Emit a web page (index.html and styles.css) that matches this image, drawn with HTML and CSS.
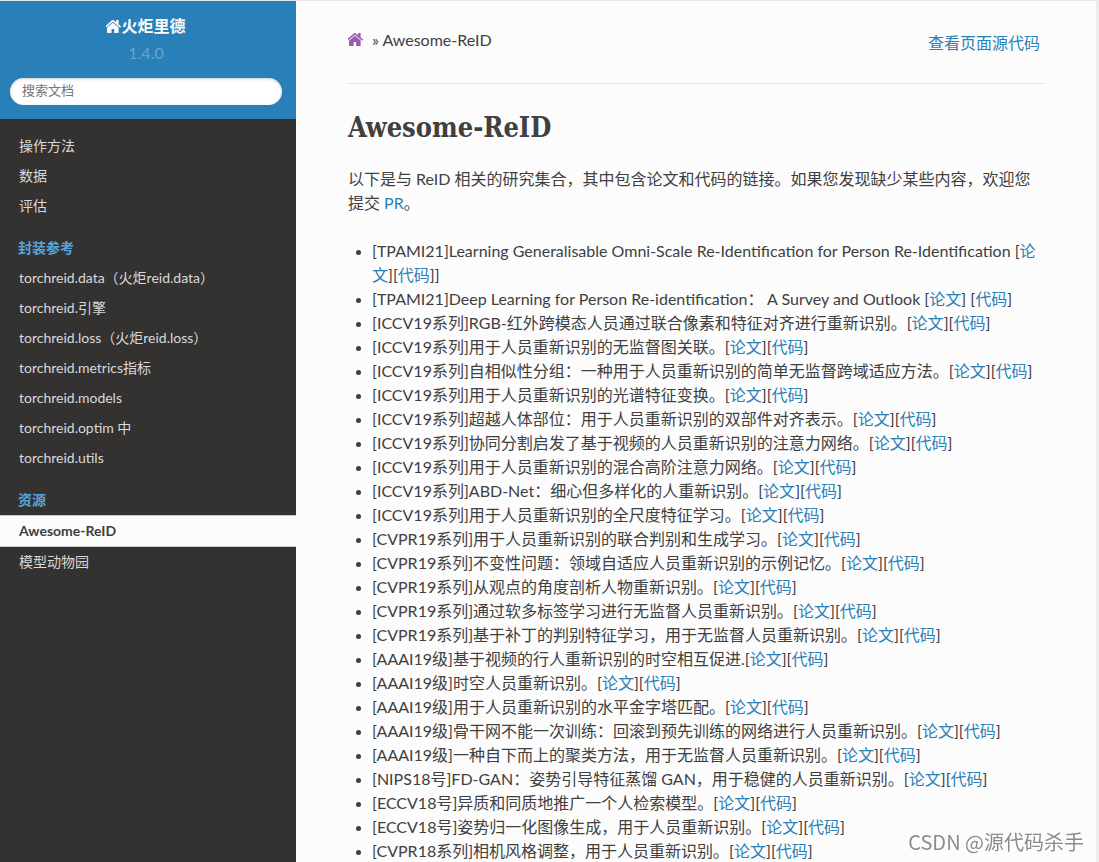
FILE: index.html
```html
<!DOCTYPE html>
<html lang="zh-CN">
<head>
<meta charset="utf-8">
<title>Awesome-ReID</title>
<link rel="stylesheet" href="styles.css">
</head>
<body>
<svg class="sprite" aria-hidden="true">
  <symbol id="home" viewBox="150 250 1492 1290">
    <path d="M1408 992v480q0 26-19 45t-45 19h-384v-384h-256v384h-384q-26 0-45-19t-19-45v-480q0-1 .5-3t.5-3l575-474 575 474q1 2 1 6zm223-69l-62 74q-8 9-21 11h-3q-13 0-21-7l-692-577-692 577q-12 8-24 7-13-2-21-11l-62-74q-8-10-7-23.5t11-21.5l719-599q32-26 76-26t76 26l244 204v-195q0-14 9-23t23-9h192q14 0 23 9t9 23v408l219 182q10 8 11 21.5t-7 23.5z"/>
  </symbol>
</svg>
<div class="shell">
  <aside class="sidebar">
    <div class="brand">
      <a class="brand-link" href="#"><svg class="icon"><use href="#home"/></svg>火炬里德</a>
      <div class="version">1.4.0</div>
      <form class="search-form"><input class="search" type="text" aria-label="搜索文档" placeholder="搜索文档"></form>
    </div>
    <nav class="menu">
      <ul class="menu-list">
        <li><a class="menu-link" href="#">操作方法</a></li>
        <li><a class="menu-link" href="#">数据</a></li>
        <li><a class="menu-link" href="#">评估</a></li>
      </ul>
      <p class="caption">封装参考</p>
      <ul class="menu-list">
        <li><a class="menu-link" href="#">torchreid.data（火炬reid.data）</a></li>
        <li><a class="menu-link" href="#">torchreid.引擎</a></li>
        <li><a class="menu-link" href="#">torchreid.loss（火炬reid.loss）</a></li>
        <li><a class="menu-link" href="#">torchreid.metrics指标</a></li>
        <li><a class="menu-link" href="#">torchreid.models</a></li>
        <li><a class="menu-link" href="#">torchreid.optim 中</a></li>
        <li><a class="menu-link" href="#">torchreid.utils</a></li>
      </ul>
      <p class="caption">资源</p>
      <ul class="menu-list">
        <li><a class="menu-link current" href="#">Awesome-ReID</a></li>
        <li><a class="menu-link" href="#">模型动物园</a></li>
      </ul>
    </nav>
  </aside>
  <main class="content">
    <header class="crumbs">
      <div class="trail"><a class="home-link" href="#" aria-label="主页"><svg class="icon"><use href="#home"/></svg></a><span>» Awesome-ReID</span></div>
      <a class="source" href="#">查看页面源代码</a>
    </header>
    <h1 class="title">Awesome-ReID</h1>
    <p class="intro">以下是与 ReID 相关的研究集合，其中包含论文和代码的链接。如果您发现缺少某些内容，欢迎您提交 <a href="#">PR</a>。</p>
    <ul class="papers">
      <li>[TPAMI21]Learning Generalisable Omni-Scale Re-Identification for Person Re-Identification [<a href="#">论文</a>][<a href="#">代码</a>]]</li>
      <li>[TPAMI21]Deep Learning for Person Re-identification： A Survey and Outlook [<a href="#">论文</a>] [<a href="#">代码</a>]</li>
      <li>[ICCV19系列]RGB-红外跨模态人员通过联合像素和特征对齐进行重新识别。[<a href="#">论文</a>][<a href="#">代码</a>]</li>
      <li>[ICCV19系列]用于人员重新识别的无监督图关联。[<a href="#">论文</a>][<a href="#">代码</a>]</li>
      <li>[ICCV19系列]自相似性分组：一种用于人员重新识别的简单无监督跨域适应方法。[<a href="#">论文</a>][<a href="#">代码</a>]</li>
      <li>[ICCV19系列]用于人员重新识别的光谱特征变换。[<a href="#">论文</a>][<a href="#">代码</a>]</li>
      <li>[ICCV19系列]超越人体部位：用于人员重新识别的双部件对齐表示。[<a href="#">论文</a>][<a href="#">代码</a>]</li>
      <li>[ICCV19系列]协同分割启发了基于视频的人员重新识别的注意力网络。[<a href="#">论文</a>][<a href="#">代码</a>]</li>
      <li>[ICCV19系列]用于人员重新识别的混合高阶注意力网络。[<a href="#">论文</a>][<a href="#">代码</a>]</li>
      <li>[ICCV19系列]ABD-Net：细心但多样化的人重新识别。[<a href="#">论文</a>][<a href="#">代码</a>]</li>
      <li>[ICCV19系列]用于人员重新识别的全尺度特征学习。[<a href="#">论文</a>][<a href="#">代码</a>]</li>
      <li>[CVPR19系列]用于人员重新识别的联合判别和生成学习。[<a href="#">论文</a>][<a href="#">代码</a>]</li>
      <li>[CVPR19系列]不变性问题：领域自适应人员重新识别的示例记忆。[<a href="#">论文</a>][<a href="#">代码</a>]</li>
      <li>[CVPR19系列]从观点的角度剖析人物重新识别。[<a href="#">论文</a>][<a href="#">代码</a>]</li>
      <li>[CVPR19系列]通过软多标签学习进行无监督人员重新识别。[<a href="#">论文</a>][<a href="#">代码</a>]</li>
      <li>[CVPR19系列]基于补丁的判别特征学习，用于无监督人员重新识别。[<a href="#">论文</a>][<a href="#">代码</a>]</li>
      <li>[AAAI19级]基于视频的行人重新识别的时空相互促进.[<a href="#">论文</a>][<a href="#">代码</a>]</li>
      <li>[AAAI19级]时空人员重新识别。[<a href="#">论文</a>][<a href="#">代码</a>]</li>
      <li>[AAAI19级]用于人员重新识别的水平金字塔匹配。[<a href="#">论文</a>][<a href="#">代码</a>]</li>
      <li>[AAAI19级]骨干网不能一次训练：回滚到预先训练的网络进行人员重新识别。[<a href="#">论文</a>][<a href="#">代码</a>]</li>
      <li>[AAAI19级]一种自下而上的聚类方法，用于无监督人员重新识别。[<a href="#">论文</a>][<a href="#">代码</a>]</li>
      <li>[NIPS18号]FD-GAN：姿势引导特征蒸馏 GAN，用于稳健的人员重新识别。[<a href="#">论文</a>][<a href="#">代码</a>]</li>
      <li>[ECCV18号]异质和同质地推广一个人检索模型。[<a href="#">论文</a>][<a href="#">代码</a>]</li>
      <li>[ECCV18号]姿势归一化图像生成，用于人员重新识别。[<a href="#">论文</a>][<a href="#">代码</a>]</li>
      <li>[CVPR18系列]相机风格调整，用于人员重新识别。[<a href="#">论文</a>][<a href="#">代码</a>]</li>
    </ul>
  </main>
</div>
<div class="watermark">CSDN @源代码杀手</div>
</body>
</html>
```

FILE: styles.css
```css
* {
  box-sizing: border-box;
}

body {
  margin: 0;
  color: #404040;
  background: #ededed;
  font: 16px/24px Lato, "Noto Sans CJK SC", sans-serif;
}

a {
  color: #2980b9;
  text-decoration: none;
}

ul {
  margin: 0;
  padding: 0;
}

.sprite {
  display: none;
}

.icon {
  width: 15px;
  height: 13px;
  fill: currentColor;
}

.shell {
  display: flex;
  height: 100vh;
  border-top: 1px solid #e8e8e8;
  border-right: 3px solid #ededed;
}

/* Sidebar */
.sidebar {
  flex: 0 0 296px;
  overflow: hidden;
  color: #d9d9d9;
  background: #343131;
}

.brand {
  display: flex;
  flex-direction: column;
  align-items: center;
  height: 118px;
  padding: 13px 14px 14px 10px;
  background: #2980b9;
}

.brand-link {
  display: flex;
  align-items: center;
  color: #fcfcfc;
  font-weight: 700;
}

.version {
  margin-top: 3px;
  color: rgba(255, 255, 255, 0.3);
}

.search-form {
  width: 100%;
  margin-top: 13px;
}

.search {
  display: block;
  width: 100%;
  height: 27px;
  padding: 0 12px 3px;
  border: 0;
  border-radius: 14px;
  background: #fff;
  box-shadow: inset 0 1px 3px #ccc, 0 0 1px #2472a4;
  font: 13px/20px Lato, "Noto Sans CJK SC", sans-serif;
}

.search::placeholder {
  color: #757575;
}

.menu {
  padding-top: 12px;
  font-size: 14px;
}

.menu-list {
  list-style: none;
}

.menu-link {
  display: block;
  padding: 0 19px;
  color: #d9d9d9;
  line-height: 30px;
}

.menu-link.current {
  border: solid #c9c9c9;
  border-width: 1px 0;
  color: #404040;
  background: #fcfcfc;
  font-weight: 700;
}

.caption {
  margin: 12px 0 0;
  padding: 0 18px;
  color: #55a5d9;
  font-weight: 700;
  line-height: 30px;
}

/* Article */
.content {
  flex: 1;
  min-width: 0;
  padding: 27px 52px;
  overflow-y: auto;
  scrollbar-width: none;
  background: #fcfcfc;
}

.crumbs {
  display: flex;
  justify-content: space-between;
  height: 56px;
  margin-bottom: 26px;
  border-bottom: 1px solid #e1e4e5;
}

.trail {
  display: flex;
  gap: 9px;
  height: 27px;
}

.home-link {
  color: #9b59b6;
}

.source {
  padding: 3px 4px;
}

.title {
  margin: 0 0 21px;
  font: 700 27px/36px "Roboto Slab", "DejaVu Serif Condensed", "DejaVu Serif", serif;
}

.intro {
  margin: 0 0 24px;
}

.papers {
  padding-left: 24px;
}

.papers li::marker {
  font-size: 14px;
}

.watermark {
  position: fixed;
  right: 15px;
  bottom: 5px;
  color: rgba(110, 110, 110, 0.8);
  font: 20px/30px "Noto Sans CJK SC", sans-serif;
  text-shadow: 1px 1px 0 #fff;
}
```
